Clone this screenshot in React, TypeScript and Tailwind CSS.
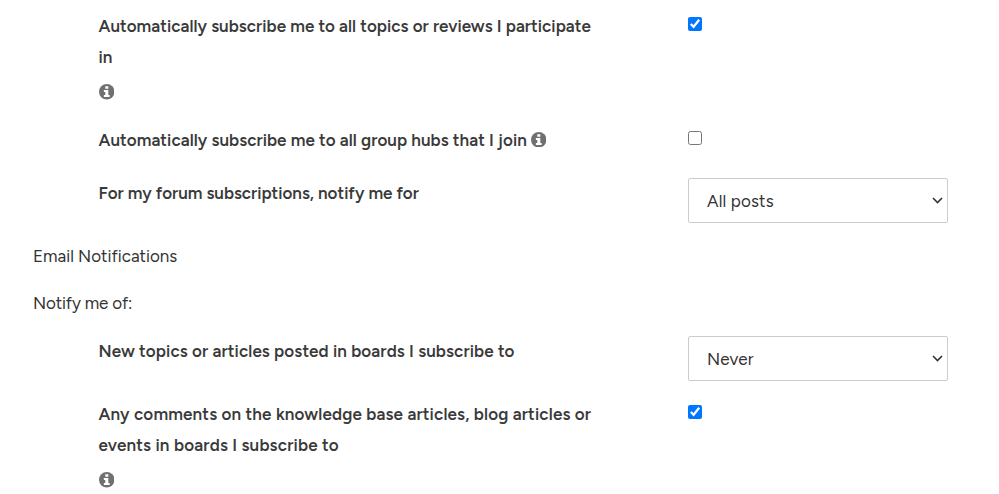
import type { ReactNode } from 'react'

function InfoIcon({ className = '' }: { className?: string }) {
  return (
    <svg className={`size-[15.5px] ${className}`} viewBox="0 0 16 16">
      <circle cx="8" cy="8" r="8" fill="#707070" />
      <path d="M6.5 2.4h3.1v2.4H6.5zM5 6.2h4.6v5.2H11v2.1H5v-2.1h1.5V8.3H5z" fill="#fff" />
    </svg>
  )
}

function Checkbox({ defaultChecked = false }: { defaultChecked?: boolean }) {
  return <input type="checkbox" defaultChecked={defaultChecked} className="mt-1.5 size-3.5" />
}

function Select({ options }: { options: string[] }) {
  return (
    <div className="relative h-[45px] w-[260px]">
      <select className="size-full appearance-none rounded-[2px] border border-[#ccc] bg-white pl-[18px] pt-0.5 text-[17px] tracking-[0.15px]">
        {options.map((option) => (
          <option key={option}>{option}</option>
        ))}
      </select>
      <svg className="pointer-events-none absolute right-[5px] top-[19px] h-[7px] w-[11px]" viewBox="0 0 11 7" fill="none" stroke="#333" strokeWidth="1.6">
        <path d="M1 1l4.5 4.5L10 1" />
      </svg>
    </div>
  )
}

function Row({ label, children, className }: { label: ReactNode; children: ReactNode; className: string }) {
  return (
    <div className={`flex items-start pl-[65.5px] ${className}`}>
      <div className="w-[589.5px] shrink-0 text-[17px] font-semibold leading-[31px] text-[#3a3a3a]">{label}</div>
      {children}
    </div>
  )
}

export default function App() {
  return (
    <div className="h-[494px] overflow-hidden bg-white pl-[33px] font-[Figtree,Lato,sans-serif] text-[#333]">
      <Row
        className="h-[125px] pt-[11px]"
        label={
          <>
            <p className="tracking-[0.035px]">Automatically subscribe me to all topics or reviews I participate</p>
            <p>in</p>
            <InfoIcon className="mt-[11px] block" />
          </>
        }
      >
        <Checkbox defaultChecked />
      </Row>
      <Row
        className="h-[53px]"
        label={
          <p className="flex items-center tracking-[0.055px]">
            Automatically subscribe me to all group hubs that I join
            <InfoIcon className="ml-1 -mt-0.5" />
          </p>
        }
      >
        <Checkbox />
      </Row>
      <Row className="h-[63px]" label={<p className="tracking-[-0.02px]">For my forum subscriptions, notify me for</p>}>
        <Select options={['All posts', 'First post only']} />
      </Row>

      <p className="h-[47px] text-[17px] leading-[31px]">Email Notifications</p>
      <p className="h-12 text-[17px] leading-[31px] tracking-[-0.15px]">Notify me of:</p>

      <Row className="h-[63px]" label={<p className="tracking-[0.11px]">New topics or articles posted in boards I subscribe to</p>}>
        <Select options={['Never', 'Immediately', 'Daily']} />
      </Row>
      <Row
        className="h-[95px]"
        label={
          <>
            <p className="tracking-[0.155px]">Any comments on the knowledge base articles, blog articles or</p>
            <p className="tracking-[0.18px]">events in boards I subscribe to</p>
            <InfoIcon className="mt-[11px] block" />
          </>
        }
      >
        <Checkbox defaultChecked />
      </Row>
    </div>
  )
}
